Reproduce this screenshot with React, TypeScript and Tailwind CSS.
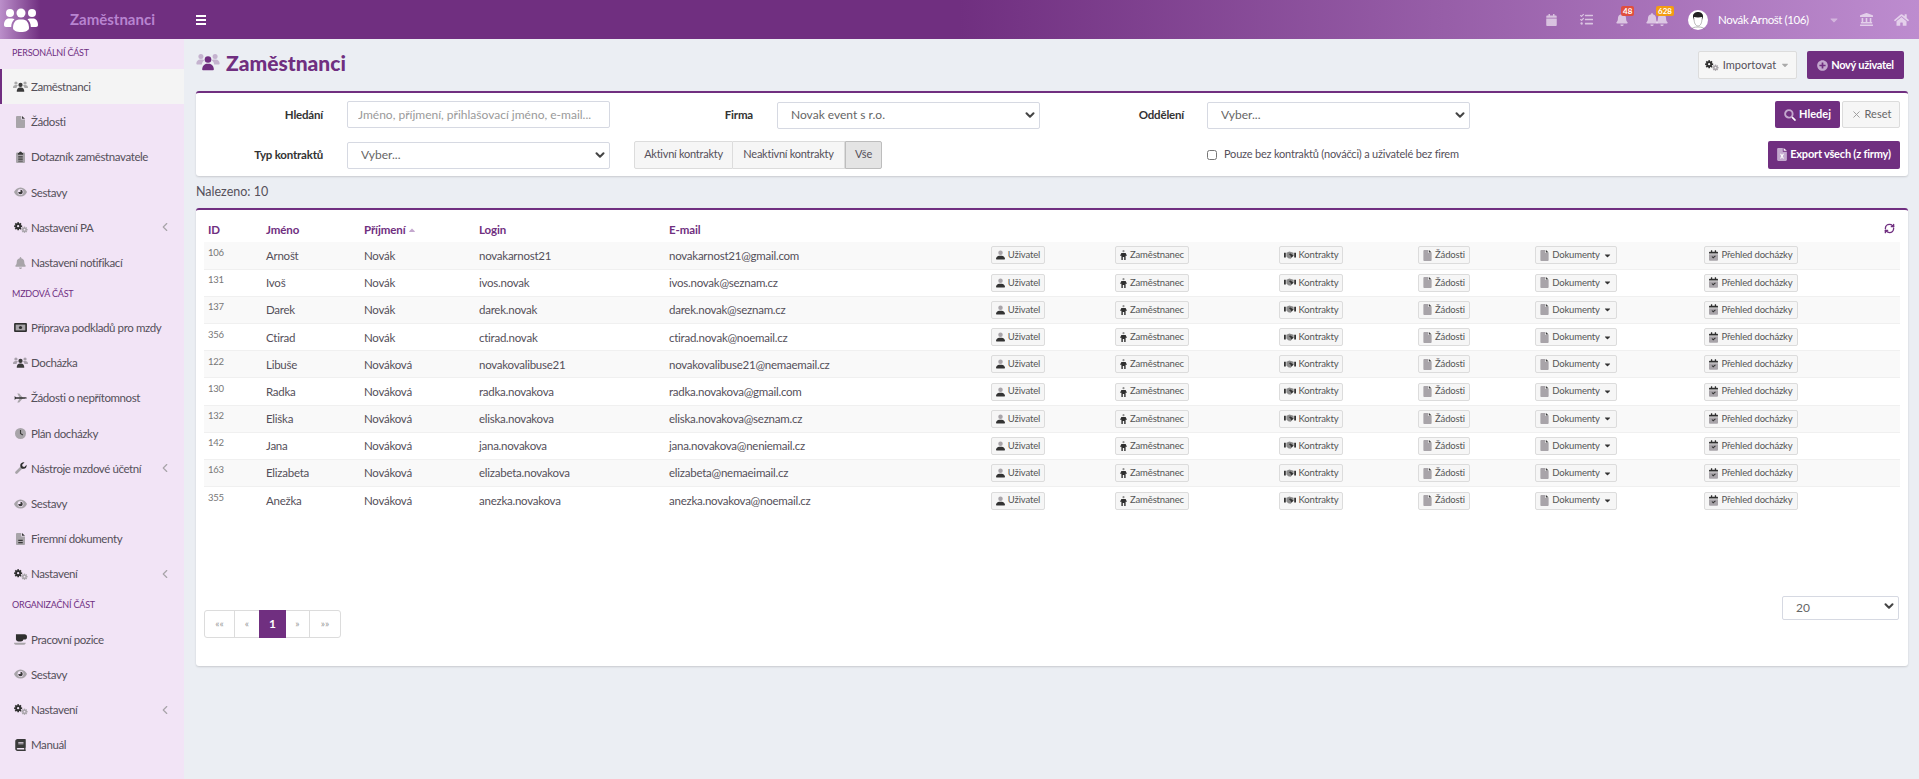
import React from 'react';
import { ChevronDown, ChevronLeft, RefreshCw, X } from 'lucide-react';
import {
  FaBell,
  FaBook,
  FaCalendar,
  FaCaretDown,
  FaCaretUp,
  FaHome,
  FaLandmark,
  FaPlusCircle,
  FaTasks,
} from 'react-icons/fa';

const font = 'font-["Lato","Liberation_Sans",sans-serif]';

type IconProps = { className?: string };

function UsersIcon({ className = 'w-[15px] h-[13px] text-[#3a3a3a]', side = 'opacity-40' }: IconProps & { side?: string }) {
  return (
    <svg viewBox="0 0 28 24" className={className} fill="currentColor">
      <g className={side}>
        <circle cx="5.5" cy="5.5" r="3" />
        <circle cx="22.5" cy="5.5" r="3" />
        <path d="M0 14c0-3 2-5 5-5h2c1 0 2 .4 2.6 1-1.6 1-2.8 2.600-3 5H1c-.6 0-1-.4-1-1zM28 14c0-3-2-5-5-5h-2c-1 0-2 .4-2.600 1 1.600 1 2.800 2.600 3 5H27c.6 0 1-.4 1-1z" />
      </g>
      <circle cx="14" cy="9" r="4" />
      <path d="M7 21c0-4 2.500-7 6-7h2c3.500 0 6 3 6 7 0 .6-.4 1-1 1H8c-.6 0-1-.4-1-1z" />
    </svg>
  );
}

function LogoIcon() {
  return (
    <svg viewBox="0 0 34 24" className="w-[34px] h-[24px]" fill="#fff">
      <circle cx="6" cy="5" r="4" />
      <circle cx="17" cy="5" r="4.500" />
      <circle cx="28" cy="5" r="4" />
      <path d="M0 17c0-4 2-6.500 5-6.500h3c1 0 1.800.3 2.500.8C8.500 13 7.300 15.500 7.200 19H2c-1.200 0-2-.8-2-2zM34 17c0-4-2-6.500-5-6.500h-3c-1 0-1.800.3-2.500.8 2 1.700 3.200 4.200 3.300 7.700H32c1.200 0 2-.8 2-2z" />
      <path d="M9 20c0-5 2.500-8.500 6-8.500h4c3.500 0 6 3.500 6 8.500 0 2.500-3.500 4-8 4s-8-1.500-8-4z" />
    </svg>
  );
}

function FileIcon({ className = 'w-[9px] h-[12px]' }: IconProps) {
  return (
    <svg viewBox="0 0 12 16" className={className}>
      <path d="M0 1.500C0 .7.700 0 1.500 0H7v4.500h5v10c0 .8-.7 1.500-1.500 1.500h-9C.7 16 0 15.300 0 14.500z" fill="#a8a4a9" />
      <path d="M8 0l4 3.500H8z" fill="#3a3a3a" />
    </svg>
  );
}

function DocLinesIcon() {
  return (
    <svg viewBox="0 0 12 16" className="w-[9px] h-[12px]">
      <path d="M0 1.500C0 .7.700 0 1.500 0H7v4.500h5v10c0 .8-.7 1.500-1.500 1.500h-9C.7 16 0 15.300 0 14.500z" fill="#a8a4a9" />
      <path d="M8 0l4 3.500H8zM3 9h6v1.500H3zM3 12h6v1.500H3z" fill="#3a3a3a" />
    </svg>
  );
}

function ClipboardIcon() {
  return (
    <svg viewBox="0 0 12 16" className="w-[9px] h-[12px]">
      <rect y="2" width="12" height="14" rx="1.500" fill="#a8a4a9" />
      <path d="M4 2.500a2 2 0 0 1 4 0h1.500V5h-7V2.500zM3 7h6v1.500H3zM3 10h6v1.500H3zM3 13h6v1H3z" fill="#3a3a3a" />
    </svg>
  );
}

function EyeIcon() {
  return (
    <svg viewBox="0 0 20 14" className="w-[13px] h-[10px]">
      <path d="M10 0c5 0 8.500 3.500 10 7-1.500 3.500-5 7-10 7S1.500 10.500 0 7c1.500-3.500 5-7 10-7z" fill="#a8a4a9" />
      <circle cx="10" cy="7" r="4.500" fill="#f2e4f6" />
      <path d="M10 3.500A3.500 3.500 0 1 1 6.500 7H10z" fill="#3a3a3a" />
    </svg>
  );
}

function Gear({ cx, cy, r, fill, hole }: { cx: number; cy: number; r: number; fill: string; hole: string }) {
  return (
    <g fill={fill}>
      <circle cx={cx} cy={cy} r={r} />
      {[0, 45, 90, 135].map((a) => (
        <rect
          key={a}
          x={cx - r * 0.3}
          y={cy - r * 1.4}
          width={r * 0.6}
          height={r * 2.8}
          transform={`rotate(${a} ${cx} ${cy})`}
        />
      ))}
      <circle cx={cx} cy={cy} r={r * 0.4} fill={hole} />
    </g>
  );
}

function CogsIcon({ hole = '#f2e4f6' }: { hole?: string }) {
  return (
    <svg viewBox="0 0 22 16" className="w-[14px] h-[11px]">
      <Gear cx={6.500} cy={6} r={4.500} fill="#2f2f2f" hole={hole} />
      <Gear cx={16.500} cy={11.500} r={3.500} fill="#a8a4a9" hole={hole} />
    </svg>
  );
}

function MoneyIcon() {
  return (
    <svg viewBox="0 0 20 14" className="w-[13px] h-[9px]">
      <rect width="20" height="14" rx="1.500" fill="#2f2f2f" />
      <rect x="2.500" y="2.500" width="15" height="9" fill="#a8a4a9" />
      <circle cx="10" cy="7" r="2.500" fill="#2f2f2f" />
    </svg>
  );
}

function PlaneIcon() {
  return (
    <svg viewBox="0 0 20 14" className="w-[13px] h-[10px]">
      <path d="M9 7L5 0h3l6 7-6 7H5z" fill="#a8a4a9" />
      <path d="M1 4l2 2h13c2 0 4 .4 4 1s-2 1-4 1H3L1 10z" fill="#2f2f2f" />
    </svg>
  );
}

function ClockIcon() {
  return (
    <svg viewBox="0 0 16 16" className="w-[11px] h-[11px]">
      <circle cx="8" cy="8" r="8" fill="#a8a4a9" />
      <path d="M7.200 3h1.600v4.500l3 2-.9 1.300-3.700-2.500z" fill="#3a3a3a" />
    </svg>
  );
}

function WrenchIcon() {
  return (
    <svg viewBox="0 0 16 16" className="w-[12px] h-[12px]">
      <path d="M2 14l7-7" stroke="#a8a4a9" strokeWidth="3.500" strokeLinecap="round" />
      <path d="M15.500 3.500l-3 3-2.500-.5-.5-2.500 3-3C9.500.100 7 2 7 4.500c0 2.800 2 4.500 4.500 4.500s4.500-2.500 4-5.500z" fill="#2f2f2f" />
    </svg>
  );
}

function CoffeeIcon() {
  return (
    <svg viewBox="0 0 20 16" className="w-[13px] h-[11px]">
      <path d="M3 0h13a4 4 0 0 1 0 8h-1.500a4 4 0 0 1-4 3H7a4 4 0 0 1-4-3z" fill="#2f2f2f" />
      <path d="M0 13h18c0 1.500-1 3-2.500 3h-13C1 16 0 14.500 0 13z" fill="#a8a4a9" />
    </svg>
  );
}

function BellIcon() {
  return <FaBell className="w-[11px] h-[12px] text-[#a8a4a9]" />;
}

function UserIcon() {
  return (
    <svg viewBox="0 0 14 14" className="w-[9px] h-[10px]">
      <circle cx="7" cy="3.500" r="3.500" fill="#a8a4a9" />
      <path d="M0 13c0-3 2.500-5 5-5h4c2.500 0 5 2 5 5 0 .6-.4 1-1 1H1c-.6 0-1-.4-1-1z" fill="#333" />
    </svg>
  );
}

function PersonIcon() {
  return (
    <svg viewBox="0 0 10 14" className="w-[7px] h-[10px]">
      <circle cx="5" cy="1.500" r="1.500" fill="#8c8c8c" />
      <path d="M2 4h6l2 4H8v6H6v-4H4v4H2V8H0z" fill="#2f2f2f" />
    </svg>
  );
}

function HandshakeIcon() {
  return (
    <svg viewBox="0 0 20 13" className="w-[12px] h-[9px]">
      <path d="M0 2h3v8H0zM17 2h3v8h-3z" fill="#333" />
      <path d="M4 2l5-2 7 2v5l-5 5-4-1-3-3z" fill="#8c8c8c" />
      <path d="M8 4l3-1 5 4-4 3-1-3z" fill="#333" />
    </svg>
  );
}

function CalendarSmall() {
  return (
    <svg viewBox="0 0 14 16" className="w-[9px] h-[11px]">
      <path d="M0 6h14v8.500c0 .8-.7 1.500-1.500 1.500h-11C.7 16 0 15.300 0 14.500z" fill="#a8a4a9" />
      <path d="M3 0h2v2h4V0h2v2h1.500c.8 0 1.500.7 1.500 1.500V5H0V3.500C0 2.700.7 2 1.500 2H3z" fill="#2f2f2f" />
      <path d="M4 10l1-1 1.500 1.500L9.500 8l1 1-4 3.500z" fill="#333" />
    </svg>
  );
}

function ExcelIcon() {
  return (
    <svg viewBox="0 0 12 16" className="w-[10px] h-[13px]">
      <path d="M0 1.500C0 .7.700 0 1.500 0H7v4.500h5v10c0 .8-.7 1.500-1.500 1.500h-9C.7 16 0 15.300 0 14.500z" fill="#c4a8ce" />
      <path d="M8 0l4 3.500H8zM3.500 7H5l1 1.800L7 7h1.500L6.800 10l1.700 3H7l-1-1.800L5 13H3.500l1.700-3z" fill="#fff" />
    </svg>
  );
}

function SearchDuo() {
  return (
    <svg viewBox="0 0 16 16" className="w-[12px] h-[12px]">
      <circle cx="6.500" cy="6.500" r="5" fill="none" stroke="#c4a8ce" strokeWidth="2.500" />
      <path d="M10 11.500l1.500-1.500 4 4a1 1 0 0 1-1.500 1.500z" fill="#fff" />
    </svg>
  );
}

function Avatar() {
  return (
    <svg viewBox="0 0 20 20" className="w-[20px] h-[20px]">
      <circle cx="10" cy="10" r="10" fill="#fff" />
      <path d="M5 10V6c0-2.500 2.500-4 5-4s5 1.500 5 4v4l-1-3c-2 .5-6 .5-8 0z" fill="#222" />
      <path d="M6 8c0 5 1.500 8 4 8s4-3 4-8" fill="none" stroke="#888" strokeWidth=".6" />
      <path d="M3 20c1-2.500 3.500-3 7-3s6 .5 7 3" fill="none" stroke="#888" strokeWidth=".6" />
    </svg>
  );
}

type NavItem = { label: string; icon: React.ReactNode; active?: boolean; arrow?: boolean };

const personal: NavItem[] = [
  { label: 'Zaměstnanci', icon: <UsersIcon />, active: true },
  { label: 'Žádosti', icon: <FileIcon /> },
  { label: 'Dotazník zaměstnavatele', icon: <ClipboardIcon /> },
  { label: 'Sestavy', icon: <EyeIcon /> },
  { label: 'Nastavení PA', icon: <CogsIcon />, arrow: true },
  { label: 'Nastavení notifikací', icon: <BellIcon /> },
];

const payroll: NavItem[] = [
  { label: 'Příprava podkladů pro mzdy', icon: <MoneyIcon /> },
  { label: 'Docházka', icon: <UsersIcon /> },
  { label: 'Žádosti o nepřítomnost', icon: <PlaneIcon /> },
  { label: 'Plán docházky', icon: <ClockIcon /> },
  { label: 'Nástroje mzdové účetní', icon: <WrenchIcon />, arrow: true },
  { label: 'Sestavy', icon: <EyeIcon /> },
  { label: 'Firemní dokumenty', icon: <DocLinesIcon /> },
  { label: 'Nastavení', icon: <CogsIcon />, arrow: true },
];

const organization: NavItem[] = [
  { label: 'Pracovní pozice', icon: <CoffeeIcon /> },
  { label: 'Sestavy', icon: <EyeIcon /> },
  { label: 'Nastavení', icon: <CogsIcon />, arrow: true },
  { label: 'Manuál', icon: <FaBook className="w-[11px] h-[12px] text-[#3a3a3a]" /> },
];

const people = [
  ['106', 'Arnošt', 'Novák', 'novakarnost21', 'novakarnost21@gmail.com'],
  ['131', 'Ivoš', 'Novák', 'ivos.novak', 'ivos.novak@seznam.cz'],
  ['137', 'Darek', 'Novák', 'darek.novak', 'darek.novak@seznam.cz'],
  ['356', 'Ctirad', 'Novák', 'ctirad.novak', 'ctirad.novak@noemail.cz'],
  ['122', 'Libuše', 'Nováková', 'novakovalibuse21', 'novakovalibuse21@nemaemail.cz'],
  ['130', 'Radka', 'Nováková', 'radka.novakova', 'radka.novakova@gmail.com'],
  ['132', 'Eliška', 'Nováková', 'eliska.novakova', 'eliska.novakova@seznam.cz'],
  ['142', 'Jana', 'Nováková', 'jana.novakova', 'jana.novakova@neniemail.cz'],
  ['163', 'Elizabeta', 'Nováková', 'elizabeta.novakova', 'elizabeta@nemaeimail.cz'],
  ['355', 'Anežka', 'Nováková', 'anezka.novakova', 'anezka.novakova@noemail.cz'],
];

function SideSection({ title, items }: { title: string; items: NavItem[] }) {
  return (
    <div>
      <div className="h-[30px] pl-[12px] pb-[3px] flex items-center text-[9px] text-[#6f2f82] tracking-[-0.2px]">{title}</div>
      {items.map((item) => (
        <div
          key={item.label}
          className={`h-[35.2px] flex items-center text-[11.5px] tracking-[-0.4px] text-[#55505a] ${
            item.active ? 'bg-[#f4f4f4] border-l-2 border-[#702f80] pl-[12px]' : 'pl-[14px]'
          }`}
        >
          <span className="w-[17px] flex justify-center shrink-0 -ml-[1px] pr-[2px]">{item.icon}</span>
          <span className="ml-[1px] whitespace-nowrap">{item.label}</span>
          {item.arrow && <ChevronLeft className="ml-auto mr-[12px] w-[14px] h-[14px] text-[#a8a4a9]" />}
        </div>
      ))}
    </div>
  );
}

function TopIcon({ children, badge, color }: { children: React.ReactNode; badge?: string; color?: string }) {
  return (
    <div className="relative w-[35px] flex justify-center text-white/60">
      {children}
      {badge && (
        <span
          className={`absolute -top-[7px] left-[17px] px-[2px] h-[10px] rounded-[2px] flex items-center text-[8px] font-bold leading-none text-white ${color}`}
        >
          {badge}
        </span>
      )}
    </div>
  );
}

function SelectBox({ value, className }: { value: string; className: string }) {
  return (
    <div className={`relative ${className}`}>
      <select
        defaultValue={value}
        className="w-full h-full appearance-none bg-white border border-[#d6d9e2] rounded-[2px] pl-[13px] text-[12px] text-[#666] outline-none"
      >
        <option>{value}</option>
      </select>
      <ChevronDown
        strokeWidth={3.5}
        className="absolute right-[3px] top-1/2 -translate-y-1/2 w-[14px] h-[14px] text-[#444] pointer-events-none"
      />
    </div>
  );
}

function RowBtn({ icon, label, caret }: { icon: React.ReactNode; label: string; caret?: boolean }) {
  return (
    <button className="h-[18px] px-[4px] mx-auto flex items-center gap-[3px] whitespace-nowrap bg-[#f6f6f6] border border-[#dcdcdc] rounded-[2px] text-[9.5px] tracking-[-0.15px] text-[#555]">
      {icon}
      {label}
      {caret && <FaCaretDown className="w-[9px] h-[9px] text-[#333]" />}
    </button>
  );
}

export default function App() {
  return (
    <div className={`h-[779px] w-full overflow-hidden bg-[#ebeef3] flex flex-col ${font}`}>
      <header className="h-[39px] shrink-0 flex items-center bg-[linear-gradient(90deg,#702f80_50%,#bd8ccf_100%)]">
        <div className="w-[184px] h-full flex items-center bg-[linear-gradient(90deg,#bb8fca_0%,#702f80_22%)]">
          <div className="ml-[4px]">
            <LogoIcon />
          </div>
          <span className="ml-[32px] text-[15px] font-bold text-[#b884d0]">Zaměstnanci</span>
        </div>
        <div className="ml-[12px] w-[10px] flex flex-col gap-[2px]">
          <span className="h-[2px] bg-white" />
          <span className="h-[2px] bg-white" />
          <span className="h-[2px] bg-white" />
        </div>
        <div className="ml-auto flex items-center">
          <TopIcon>
            <FaCalendar className="w-[11px] h-[12px]" />
          </TopIcon>
          <TopIcon>
            <FaTasks className="w-[13px] h-[13px]" />
          </TopIcon>
          <TopIcon badge="48" color="bg-[#e04f3f]">
            <FaBell className="w-[12px] h-[13px]" />
          </TopIcon>
          <TopIcon badge="628" color="bg-[#f39c12]">
            <span className="flex">
              <FaBell className="w-[12px] h-[13px] -mr-[2px]" />
              <FaBell className="w-[12px] h-[13px]" />
            </span>
          </TopIcon>
          <div className="ml-[14px]">
            <Avatar />
          </div>
          <span className="ml-[10px] w-[88px] whitespace-nowrap text-[11.5px] tracking-[-0.4px] text-white">
            Novák Arnošt (106)
          </span>
          <div className="w-[43px] pl-[12px] flex justify-center text-white/40">
            <FaCaretDown className="w-[12px] h-[12px]" />
          </div>
          <TopIcon>
            <FaLandmark className="w-[13px] h-[13px]" />
          </TopIcon>
          <TopIcon>
            <FaHome className="w-[15px] h-[14px]" />
          </TopIcon>
        </div>
      </header>

      <div className="flex-1 flex min-h-0">
        <aside className="w-[184px] shrink-0 bg-[#f2e4f6]">
          <SideSection title="PERSONÁLNÍ ČÁST" items={personal} />
          <SideSection title="MZDOVÁ ČÁST" items={payroll} />
          <SideSection title="ORGANIZAČNÍ ČÁST" items={organization} />
        </aside>

        <main className="flex-1 pl-[12px] pr-[11px]">
          <div className="h-[52px] flex items-start pt-[12px] pr-[4px]">
            <UsersIcon className="mt-[1px] w-[24px] h-[20px] text-[#702f80]" side="opacity-30" />
            <h1 className="ml-[6px] text-[21px] leading-[24px] font-black text-[#702f80]">Zaměstnanci</h1>
            <button className="ml-auto h-[28px] w-[99px] flex items-center justify-center gap-[4px] bg-[#f6f6f6] border border-[#dcdcdc] rounded-[2px] text-[11px] text-[#55505a]">
              <CogsIcon hole="#f6f6f6" />
              Importovat
              <FaCaretDown className="w-[10px] h-[10px] text-[#aaa]" />
            </button>
            <button className="ml-[10px] h-[28px] w-[97px] flex items-center justify-center gap-[3px] bg-[#702f80] rounded-[2px] text-[11px] tracking-[-0.3px] font-bold text-white">
              <FaPlusCircle className="w-[11px] h-[11px] text-[#c4a8ce]" />
              Nový uživatel
            </button>
          </div>

          <section className="bg-white border-t-2 border-[#702f80] rounded-[3px] shadow-[0_1px_2px_rgba(0,0,0,0.15)] pt-[8px] pb-[8px] pr-[8px] grid grid-cols-[151px_263px_167px_263px_167px_263px_1fr] grid-rows-[27px_27px] gap-y-[13px] items-center">
            <label className="pr-[24px] text-right text-[11.5px] tracking-[-0.2px] font-bold text-[#333]">Hledání</label>
            <input
              placeholder="Jméno, příjmení, přihlašovací jméno, e-mail..."
              className="h-[27px] bg-white border border-[#d6d9e2] rounded-[2px] px-[10px] text-[12px] outline-none placeholder:text-[#9a9a9a]"
            />
            <label className="pr-[24px] text-right text-[11.5px] tracking-[-0.2px] font-bold text-[#333]">Firma</label>
            <SelectBox value="Novak event s r.o." className="h-[27px]" />
            <label className="pr-[23px] text-right text-[11.5px] tracking-[-0.2px] font-bold text-[#333]">Oddělení</label>
            <SelectBox value="Vyber..." className="h-[27px]" />
            <div className="flex justify-end gap-[2px]">
              <button className="h-[27px] w-[65px] flex items-center justify-center gap-[3px] bg-[#702f80] rounded-[2px] text-[11px] font-bold text-white">
                <SearchDuo />
                Hledej
              </button>
              <button className="h-[27px] w-[58px] flex items-center justify-center gap-[3px] bg-[#f6f6f6] border border-[#dcdcdc] rounded-[2px] text-[11px] text-[#666]">
                <X className="w-[11px] h-[11px] text-[#999]" />
                Reset
              </button>
            </div>

            <label className="pr-[24px] text-right text-[11.5px] tracking-[-0.2px] font-bold text-[#333]">Typ kontraktů</label>
            <SelectBox value="Vyber..." className="h-[27px]" />
            <div className="col-span-2 pl-[24px] flex h-[28px] text-[11px] tracking-[-0.25px] text-[#55505a]">
              <span className="w-[99px] flex items-center justify-center bg-[#f6f6f6] border border-[#dcdcdc] rounded-l-[2px]">
                Aktivní kontrakty
              </span>
              <span className="w-[112px] flex items-center justify-center bg-[#f6f6f6] border-y border-r border-[#dcdcdc]">
                Neaktivní kontrakty
              </span>
              <span className="w-[37px] flex items-center justify-center bg-[#e4e4e4] border border-[#bdbdbd] rounded-r-[2px]">
                Vše
              </span>
            </div>
            <div />
            <label className="flex items-center gap-[7px] whitespace-nowrap text-[11px] tracking-[-0.2px] text-[#55505a]">
              <input type="checkbox" className="w-[10px] h-[10px]" />
              Pouze bez kontraktů (nováčci) a uživatelé bez firem
            </label>
            <div className="flex justify-end">
              <button className="h-[28px] w-[132px] whitespace-nowrap flex items-center justify-center gap-[3px] bg-[#702f80] rounded-[2px] text-[11px] tracking-[-0.2px] font-bold text-white">
                <ExcelIcon />
                Export všech (z firmy)
              </button>
            </div>
          </section>

          <p className="h-[32px] flex items-center text-[12.5px] text-[#55505a]">Nalezeno: 10</p>

          <section className="h-[458px] bg-white border-t-2 border-[#702f80] rounded-[3px] shadow-[0_1px_2px_rgba(0,0,0,0.15)] px-[8px] flex flex-col">
            <table className="w-full table-fixed border-collapse">
              <colgroup>
                <col className="w-[58px]" />
                <col className="w-[98px]" />
                <col className="w-[115px]" />
                <col className="w-[190px]" />
                <col className="w-[285px]" />
                <col className="w-[136px]" />
                <col className="w-[132px]" />
                <col className="w-[186px]" />
                <col className="w-[80px]" />
                <col className="w-[184px]" />
                <col className="w-[166px]" />
                <col />
              </colgroup>
              <thead>
                <tr className="h-[32px] text-left text-[11.5px] tracking-[-0.1px] font-bold text-[#702f80]">
                  <th className="pl-[4px] pt-[8px] font-bold">ID</th>
                  <th className="pl-[4px] pt-[8px] font-bold">Jméno</th>
                  <th className="pl-[4px] pt-[8px] font-bold">
                    <span className="inline-flex items-center gap-[1px]">
                      Příjmení
                      <FaCaretUp className="w-[10px] h-[10px] text-[#c4a8ce]" />
                    </span>
                  </th>
                  <th className="pl-[4px] pt-[8px] font-bold">Login</th>
                  <th className="pl-[4px] pt-[8px] font-bold">E-mail</th>
                  <th colSpan={6} />
                  <th className="pr-[5px] pt-[4px]">
                    <RefreshCw className="ml-auto w-[11px] h-[11px] text-[#702f80]" strokeWidth={3} />
                  </th>
                </tr>
              </thead>
              <tbody>
                {people.map(([id, first, last, login, email], i) => (
                  <tr
                    key={id}
                    className={`h-[27.2px] border-b last:border-b-0 border-[#f0f0f0] text-[11.5px] tracking-[-0.25px] text-[#55505a] ${
                      i % 2 === 0 ? 'bg-[#f9f9f9]' : 'bg-white'
                    }`}
                  >
                    <td className="pl-[4px] pb-[5px] text-[9.5px] text-[#777]">{id}</td>
                    <td className="pl-[4px]">{first}</td>
                    <td className="pl-[4px]">{last}</td>
                    <td className="pl-[4px]">{login}</td>
                    <td className="pl-[4px]">{email}</td>
                    <td>
                      <RowBtn icon={<UserIcon />} label="Uživatel" />
                    </td>
                    <td>
                      <RowBtn icon={<PersonIcon />} label="Zaměstnanec" />
                    </td>
                    <td>
                      <RowBtn icon={<HandshakeIcon />} label="Kontrakty" />
                    </td>
                    <td>
                      <RowBtn icon={<FileIcon className="w-[9px] h-[11px]" />} label="Žádosti" />
                    </td>
                    <td>
                      <RowBtn icon={<FileIcon className="w-[9px] h-[11px]" />} label="Dokumenty" caret />
                    </td>
                    <td>
                      <RowBtn icon={<CalendarSmall />} label="Přehled docházky" />
                    </td>
                    <td />
                  </tr>
                ))}
              </tbody>
            </table>

            <div className="mt-[80px] flex items-start justify-between">
              <div className="mt-[16px] h-[28px] flex border border-[#dcdcdc] rounded-[3px] text-[10px] text-[#999]">
                <span className="w-[30px] flex items-center justify-center border-r border-[#dcdcdc]">««</span>
                <span className="w-[24px] flex items-center justify-center">«</span>
                <span className="w-[27px] -my-[1px] flex items-center justify-center bg-[#702f80] text-[12px] font-bold text-white">
                  1
                </span>
                <span className="w-[24px] flex items-center justify-center border-r border-[#dcdcdc]">»</span>
                <span className="w-[30px] flex items-center justify-center">»»</span>
              </div>
              <SelectBox value="20" className="h-[24px] w-[117px] mr-[1px]" />
            </div>
          </section>
        </main>
      </div>
    </div>
  );
}
